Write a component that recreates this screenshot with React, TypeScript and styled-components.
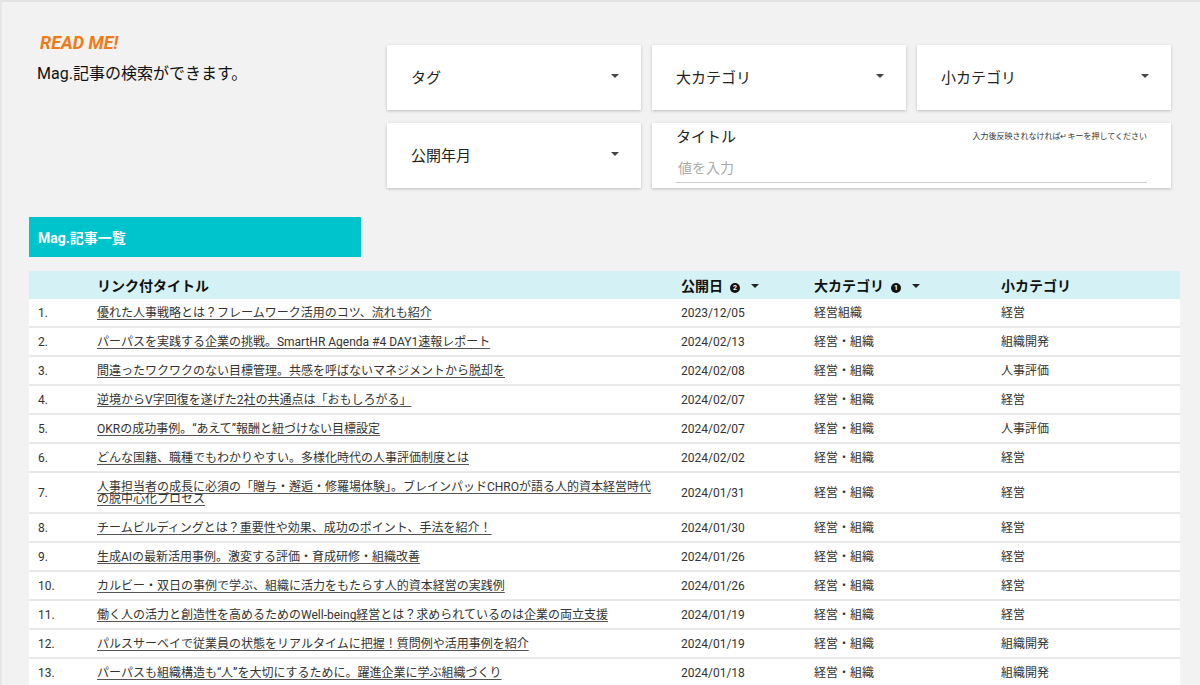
import React from 'react'
import styled, { createGlobalStyle } from 'styled-components'

const GlobalStyle = createGlobalStyle`
  html, body {
    margin: 0;
    padding: 0;
    overflow: hidden;
    background: #f2f2f2;
  }
  body {
    font-family: Roboto, "Noto Sans CJK JP", sans-serif;
    color: #212121;
  }
`

const Page = styled.div`
  min-height: 685px;
  box-sizing: border-box;
  border-top: 2px solid #e3e3e3;
  border-left: 2px solid #e6e6e6;
  padding: 0 20px 0 27px;
`

const Top = styled.div`
  display: flex;
  padding-top: 43px;
`

const Intro = styled.div`
  width: 358px;
`

const ReadMe = styled.div`
  color: #f07a17;
  font-size: 18px;
  font-weight: 700;
  font-style: italic;
  margin: -12px 0 0 11px;
  line-height: 20px;
`

const IntroText = styled.p`
  margin: 11px 0 0 8px;
  font-size: 16px;
  line-height: 20px;
  color: #111;
`

const Filters = styled.div`
  display: grid;
  grid-template-columns: repeat(3, 254px);
  grid-auto-rows: 65px;
  column-gap: 11px;
  row-gap: 13px;
`

const Card = styled.div<{ $span?: number }>`
  grid-column: span ${(p) => p.$span || 1};
  background: #fff;
  box-shadow: 0 1px 3px rgba(0, 0, 0, 0.22);
  display: flex;
  align-items: center;
  justify-content: space-between;
  padding: 0 22px 3px 24px;
  font-size: 15px;
  color: #222;
`

const Caret = styled.span`
  width: 0;
  height: 0;
  border-left: 4px solid transparent;
  border-right: 4px solid transparent;
  border-top: 4px solid #444;
`

const TitleCard = styled(Card)`
  display: grid;
  grid-template-columns: 1fr auto;
  grid-template-rows: 30px 1fr;
  align-items: start;
  padding: 0 24px 5px 24px;
`

const FieldLabel = styled.div`
  font-size: 15px;
  line-height: 15px;
  padding-top: 7px;
  color: #222;
`

const Hint = styled.div`
  font-size: 8px;
  line-height: 8px;
  padding: 10px 0 0 4px;
  color: #333;
`

const Input = styled.div`
  grid-column: span 2;
  border-bottom: 1px solid #ccc;
  color: #aaa;
  font-size: 14px;
  line-height: 16px;
  padding: 7px 2px 6px;
`

const SectionTitle = styled.div`
  margin-top: 29px;
  width: 332px;
  height: 40px;
  background: #00c4cc;
  color: #fff;
  font-size: 14px;
  font-weight: 700;
  display: flex;
  align-items: center;
  padding-left: 9px;
  box-sizing: border-box;
`

const Table = styled.table`
  margin-top: 14px;
  width: 1151px;
  border-collapse: collapse;
  table-layout: fixed;
  font-size: 12px;
  color: #333;
`

const HeadRow = styled.tr`
  background: #d4f2f5;
  height: 28px;
`

const Th = styled.th`
  text-align: left;
  font-size: 14px;
  font-weight: 700;
  color: #111;
  padding: 0;
  white-space: nowrap;
`

const Row = styled.tr`
  background: #fff;
  border-bottom: 2px solid #e9e9e9;
`

const Td = styled.td<{ $pl?: number }>`
  padding: 8px 0 7px ${(p) => p.$pl ?? 0}px;
  line-height: 12px;
  vertical-align: middle;
`

const TitleCell = styled(Td)`
  padding-right: 26px;
`

const TitleLink = styled.a`
  color: #333;
  text-decoration: underline;
  text-underline-offset: 2px;
  text-decoration-color: #555;
`

const Badge = styled.span`
  display: inline-flex;
  align-items: center;
  justify-content: center;
  width: 10px;
  height: 10px;
  border-radius: 50%;
  background: #111;
  color: #fff;
  font-size: 7px;
  font-weight: 700;
  margin-left: 7px;
  vertical-align: 1px;
`

const SortCaret = styled(Caret)`
  display: inline-block;
  margin-left: 11px;
  vertical-align: 3px;
  border-top-color: #222;
`

const articles = [
  ['優れた人事戦略とは？フレームワーク活用のコツ、流れも紹介', '2023/12/05', '経営組織', '経営'],
  ['パーパスを実践する企業の挑戦。SmartHR Agenda #4 DAY1速報レポート', '2024/02/13', '経営・組織', '組織開発'],
  ['間違ったワクワクのない目標管理。共感を呼ばないマネジメントから脱却を', '2024/02/08', '経営・組織', '人事評価'],
  ['逆境からV字回復を遂げた2社の共通点は「おもしろがる」', '2024/02/07', '経営・組織', '経営'],
  ['OKRの成功事例。“あえて”報酬と紐づけない目標設定', '2024/02/07', '経営・組織', '人事評価'],
  ['どんな国籍、職種でもわかりやすい。多様化時代の人事評価制度とは', '2024/02/02', '経営・組織', '経営'],
  ['人事担当者の成長に必須の「贈与・邂逅・修羅場体験」。ブレインパッドCHROが語る人的資本経営時代の脱中心化プロセス', '2024/01/31', '経営・組織', '経営'],
  ['チームビルディングとは？重要性や効果、成功のポイント、手法を紹介！', '2024/01/30', '経営・組織', '経営'],
  ['生成AIの最新活用事例。激変する評価・育成研修・組織改善', '2024/01/26', '経営・組織', '経営'],
  ['カルビー・双日の事例で学ぶ、組織に活力をもたらす人的資本経営の実践例', '2024/01/26', '経営・組織', '経営'],
  ['働く人の活力と創造性を高めるためのWell-being経営とは？求められているのは企業の両立支援', '2024/01/19', '経営・組織', '経営'],
  ['パルスサーベイで従業員の状態をリアルタイムに把握！質問例や活用事例を紹介', '2024/01/19', '経営・組織', '組織開発'],
  ['パーパスも組織構造も“人”を大切にするために。躍進企業に学ぶ組織づくり', '2024/01/18', '経営・組織', '組織開発'],
]

const App: React.FC = () => {
  return (
    <Page>
      <GlobalStyle />
      <Top>
        <Intro>
          <ReadMe>READ ME!</ReadMe>
          <IntroText>Mag.記事の検索ができます。</IntroText>
        </Intro>
        <Filters>
          <Card>
            タグ
            <Caret />
          </Card>
          <Card>
            大カテゴリ
            <Caret />
          </Card>
          <Card>
            小カテゴリ
            <Caret />
          </Card>
          <Card>
            公開年月
            <Caret />
          </Card>
          <TitleCard $span={2}>
            <FieldLabel>タイトル</FieldLabel>
            <Hint>入力後反映されなければ↵キーを押してください</Hint>
            <Input>値を入力</Input>
          </TitleCard>
        </Filters>
      </Top>

      <SectionTitle>Mag.記事一覧</SectionTitle>

      <Table>
        <colgroup>
          <col style={{ width: 68 }} />
          <col style={{ width: 584 }} />
          <col style={{ width: 133 }} />
          <col style={{ width: 187 }} />
          <col />
        </colgroup>
        <thead>
          <HeadRow>
            <Th />
            <Th>リンク付タイトル</Th>
            <Th>
              公開日<Badge>2</Badge>
              <SortCaret />
            </Th>
            <Th>
              大カテゴリ<Badge>1</Badge>
              <SortCaret />
            </Th>
            <Th>小カテゴリ</Th>
          </HeadRow>
        </thead>
        <tbody>
          {articles.map(([title, date, cat, sub], i) => (
            <Row key={title}>
              <Td $pl={9}>{i + 1}.</Td>
              <TitleCell>
                <TitleLink href="#">{title}</TitleLink>
              </TitleCell>
              <Td>{date}</Td>
              <Td>{cat}</Td>
              <Td>{sub}</Td>
            </Row>
          ))}
        </tbody>
      </Table>
    </Page>
  )
}

export default App
